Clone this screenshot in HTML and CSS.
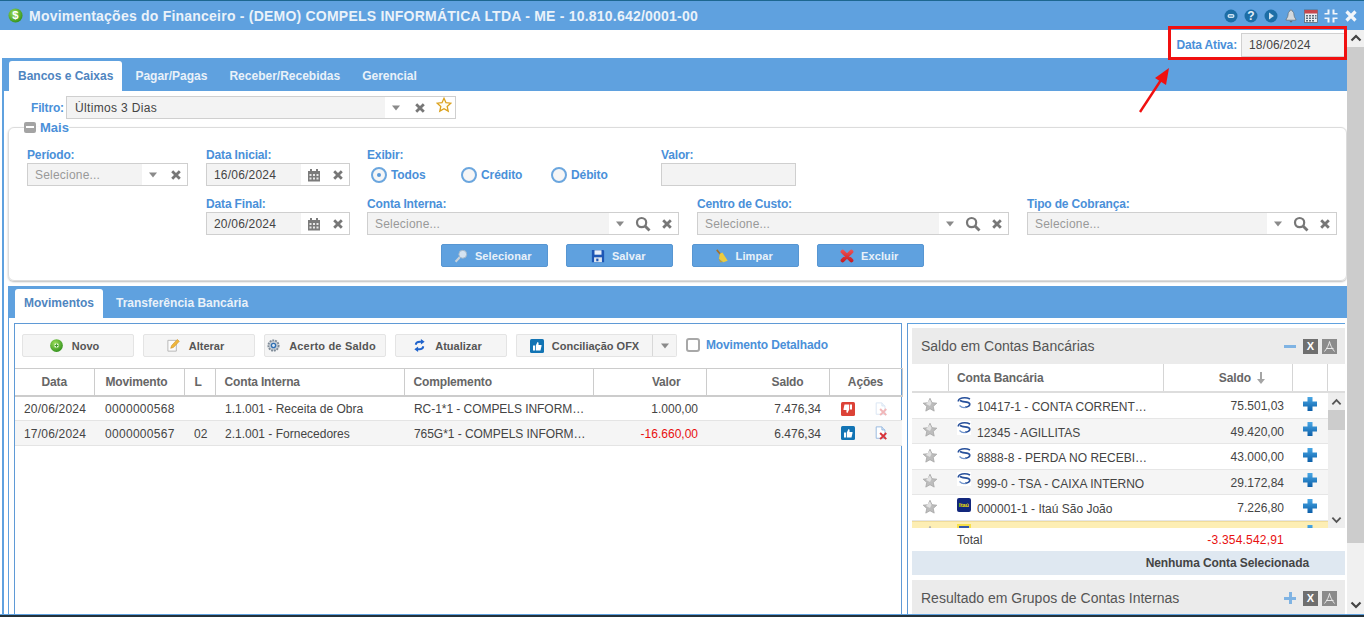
FILE: index.html
```html
<!DOCTYPE html>
<html lang="pt-BR">
<head>
<meta charset="utf-8">
<title>Movimentações do Financeiro</title>
<link rel="stylesheet" href="styles.css">
</head>
<body>
<svg class="defs" width="0" height="0" aria-hidden="true">
  <defs>
    <radialGradient id="g-green" cx=".4" cy=".35" r=".7"><stop offset="0" stop-color="#9ee05a"/><stop offset="1" stop-color="#2f8f1c"/></radialGradient>
    <linearGradient id="g-plus" x1="0" y1="0" x2="0" y2="1"><stop offset="0" stop-color="#49a8e6"/><stop offset="1" stop-color="#0b5ea8"/></linearGradient>
    <linearGradient id="g-red" gradientUnits="userSpaceOnUse" x1="0" y1="0" x2="0" y2="16"><stop offset="0" stop-color="#f0565a"/><stop offset="1" stop-color="#c5161c"/></linearGradient>
    <symbol id="i-caret" viewBox="0 0 10 6"><path d="M1 .5h8L5 5.500z" fill="#8a8a8a"/></symbol>
    <symbol id="i-x" viewBox="0 0 12 12"><path d="M2.200 2.200l7.600 7.600M9.800 2.200l-7.600 7.600" stroke="#777" stroke-width="2.800" fill="none"/></symbol>
    <symbol id="i-search" viewBox="0 0 16 16"><circle cx="6.600" cy="6.600" r="4.600" fill="none" stroke="#777" stroke-width="2.200"/><path d="M10 10l4.500 4.500" stroke="#777" stroke-width="2.800"/></symbol>
    <symbol id="i-cal" viewBox="0 0 14 14"><path d="M1 3h12v10.500H1z" fill="#7b7b7b"/><path d="M3 1h2v3H3zM9 1h2v3H9z" fill="#7b7b7b"/><path d="M2.500 6h2v2h-2zM6 6h2v2H6zM9.500 6h2v2h-2zM2.500 9.500h2v2h-2zM6 9.500h2v2H6zM9.500 9.500h2v2h-2z" fill="#e8e8e8"/></symbol>
    <symbol id="i-star" viewBox="0 0 16 16"><path d="M8 1.300l2 4.400 4.800.5-3.600 3.200 1 4.700L8 11.700l-4.200 2.400 1-4.700L1.200 6.200 6 5.700z" fill="#bdbdbd" stroke="#a5a5a5" stroke-width=".8"/><path d="M8 2.500l1.500 3.400L8 9 4 7z" fill="#e2e2e2"/></symbol>
    <symbol id="i-plus" viewBox="0 0 16 16"><path d="M5.500 1h5v4.500H15v5h-4.500V15h-5v-4.500H1v-5h4.500z" fill="url(#g-plus)"/></symbol>
    <symbol id="i-bank" viewBox="0 0 14 14"><path d="M1.300 5.500C.8 2 8 .3 13 3" fill="none" stroke="#27509b" stroke-width="1.500"/><path d="M3 4.300C5 7 11.500 4.800 12.700 7.800 13 10 10 11 8 11.300" fill="none" stroke="#27509b" stroke-width="1.700"/><path d="M2.500 9.500C4.500 11.500 7 12 9 11.300" fill="none" stroke="#6f93cc" stroke-width="1.200"/></symbol>
    <symbol id="i-thumb" viewBox="0 0 14 14"><path d="M3 6.500h2v5H3zM5.800 6.500L7.500 3c1 0 1.300 1 1 3H11.500v1l-1 4.500H5.800z" fill="#fff"/></symbol>
    <symbol id="i-doc" viewBox="0 0 16 16"><path d="M2.500 1H9l3.500 3.500V14h-10z" fill="#fff" stroke="#8fb4de"/><path d="M9 1v3.500h3.500" fill="#d5e4f5" stroke="#8fb4de"/><path d="M7 8l7 7M14 8l-7 7" stroke="#d8333a" stroke-width="2.200"/></symbol>
  </defs>
</svg>

<div class="window">
  <header class="titlebar">
    <svg class="title-logo" viewBox="0 0 16 16"><circle cx="8" cy="8" r="7.500" fill="url(#g-green)"/><text x="8" y="12" text-anchor="middle" class="dollar">$</text></svg>
    <h1 class="title">Movimentações do Financeiro - (DEMO) COMPELS INFORMÁTICA LTDA - ME - 10.810.642/0001-00</h1>
    <div class="title-tools">
      <svg class="tool" viewBox="0 0 14 14"><circle cx="7" cy="7" r="6.500" fill="#1d6ea6"/><rect x="3.500" y="5" width="7" height="4" rx="2" fill="#cfe2f0"/><rect x="5" y="6.500" width="4" height="1" fill="#1d6ea6"/></svg>
      <svg class="tool" viewBox="0 0 14 14"><circle cx="7" cy="7" r="6.500" fill="#1d6ea6"/><text x="7" y="11" text-anchor="middle" class="qmark">?</text></svg>
      <svg class="tool" viewBox="0 0 14 14"><circle cx="7" cy="7" r="6.500" fill="#1d6ea6"/><path d="M5 3.500l5 3.500-5 3.500z" fill="#cfe2f0"/></svg>
      <svg class="tool" viewBox="0 0 14 14"><path d="M7 .8c.8 0 1 .6 1 1.200 1.500.6 1.800 2 2 4 .2 2 1 3 1.800 4v1.200H2.200V10c.8-1 1.600-2 1.800-4 .2-2 .5-3.400 2-4 0-.6.2-1.200 1-1.200z" fill="#d3d9de" stroke="#5f6b75" stroke-width=".7"/><path d="M5.500 12h3L7 13.800z" fill="#5f6b75"/></svg>
      <svg class="tool" viewBox="0 0 14 14"><rect x=".5" y="1" width="13" height="12.500" fill="#e9eef3" stroke="#4d5d6b" stroke-width=".7"/><rect x=".5" y="1" width="13" height="3.500" fill="#c8464c"/><path d="M2 6h2v1.500H2zM5 6h2v1.500H5zM8 6h2v1.500H8zM11 6h1.500v1.500H11zM2 8.500h2V10H2zM5 8.500h2V10H5zM8 8.500h2V10H8zM11 8.500h1.500V10H11zM2 11h2v1.500H2zM5 11h2v1.500H5zM8 11h2v1.500H8z" fill="#5a6c7c"/></svg>
      <svg class="tool" viewBox="0 0 14 14"><path d="M5.500.5v5h-5V4H3.500L3.500.5zM8.500.5h2V4h3v1.500h-5zM.5 8.500h5v5h-2V10h-3zM8.500 8.500h5V10h-3v3.500h-2z" fill="#f2f6fa"/></svg>
      <svg class="tool" viewBox="0 0 14 14"><path d="M2.500 2.500l9 9M11.500 2.500l-9 9" stroke="#f2f6fa" stroke-width="3.200"/></svg>
    </div>
  </header>

  <div class="workspace">
    <main class="content">
      <div class="date-row">
        <label class="label-inline">Data Ativa:</label>
        <div class="date-input">18/06/2024</div>
      </div>

      <section class="outer-panel">
        <nav class="tabbar">
          <a class="tab tab-active">Bancos e Caixas</a>
          <a class="tab">Pagar/Pagas</a>
          <a class="tab">Receber/Recebidas</a>
          <a class="tab">Gerencial</a>
        </nav>

        <div class="filter-row">
          <label class="label-inline">Filtro:</label>
          <div class="combo combo-filter">
            <span class="combo-text text-dark">Últimos 3 Dias</span>
            <span class="combo-icons">
              <svg class="ic-caret"><use href="#i-caret"/></svg>
              <svg class="ic-x"><use href="#i-x"/></svg>
              <svg class="ic-fav" viewBox="0 0 16 16"><path d="M8 1.300l2 4.400 4.800.5-3.600 3.200 1 4.700L8 11.700l-4.200 2.400 1-4.700L1.200 6.200 6 5.700z" fill="#fffdf2" stroke="#dba11c" stroke-width="1.300"/></svg>
            </span>
          </div>
        </div>

        <fieldset class="more">
          <legend class="more-legend"><span class="collapse-box"></span>Mais</legend>
          <div class="form-row form-row-1">
            <div class="field f-periodo">
              <label class="label">Período:</label>
              <div class="combo"><span class="combo-text">Selecione...</span><span class="combo-icons"><svg class="ic-caret"><use href="#i-caret"/></svg><svg class="ic-x"><use href="#i-x"/></svg></span></div>
            </div>
            <div class="field f-data">
              <label class="label">Data Inicial:</label>
              <div class="combo"><span class="combo-text text-dark">16/06/2024</span><span class="combo-icons"><svg class="ic-cal"><use href="#i-cal"/></svg><svg class="ic-x"><use href="#i-x"/></svg></span></div>
            </div>
            <div class="field f-exibir">
              <label class="label">Exibir:</label>
              <div class="radios">
                <span class="radio radio-on">Todos</span>
                <span class="radio">Crédito</span>
                <span class="radio">Débito</span>
              </div>
            </div>
            <div class="field f-valor">
              <label class="label">Valor:</label>
              <div class="combo"></div>
            </div>
          </div>
          <div class="form-row form-row-2">
            <div class="field f-data">
              <label class="label">Data Final:</label>
              <div class="combo"><span class="combo-text text-dark">20/06/2024</span><span class="combo-icons"><svg class="ic-cal"><use href="#i-cal"/></svg><svg class="ic-x"><use href="#i-x"/></svg></span></div>
            </div>
            <div class="field f-conta">
              <label class="label">Conta Interna:</label>
              <div class="combo"><span class="combo-text">Selecione...</span><span class="combo-icons"><svg class="ic-caret"><use href="#i-caret"/></svg><svg class="ic-search"><use href="#i-search"/></svg><svg class="ic-x"><use href="#i-x"/></svg></span></div>
            </div>
            <div class="field f-conta">
              <label class="label">Centro de Custo:</label>
              <div class="combo"><span class="combo-text">Selecione...</span><span class="combo-icons"><svg class="ic-caret"><use href="#i-caret"/></svg><svg class="ic-search"><use href="#i-search"/></svg><svg class="ic-x"><use href="#i-x"/></svg></span></div>
            </div>
            <div class="field f-tipo">
              <label class="label">Tipo de Cobrança:</label>
              <div class="combo"><span class="combo-text">Selecione...</span><span class="combo-icons"><svg class="ic-caret"><use href="#i-caret"/></svg><svg class="ic-search"><use href="#i-search"/></svg><svg class="ic-x"><use href="#i-x"/></svg></span></div>
            </div>
          </div>
          <div class="actions">
            <button class="btn-blue"><svg class="btn-ic" viewBox="0 0 16 16"><circle cx="10" cy="6" r="4.500" fill="#d4e3f1" stroke="#9fb4c6"/><path d="M6.500 9.500L1.800 14.500" stroke="#c9d3dc" stroke-width="2.400"/></svg>Selecionar</button>
            <button class="btn-blue"><svg class="btn-ic" viewBox="0 0 16 16"><path d="M1 1h13l1 1v13H1z" fill="#1e57b5"/><rect x="4" y="1.500" width="8" height="5" fill="#e9f0fa"/><rect x="3.500" y="9.500" width="9" height="5.500" fill="#dfe6ee"/><rect x="6" y="11" width="2.500" height="3" fill="#1e57b5"/></svg>Salvar</button>
            <button class="btn-blue"><svg class="btn-ic" viewBox="0 0 16 16"><path d="M2 1l5 6" stroke="#a5702a" stroke-width="1.800"/><path d="M5.500 5.500l3-1.500 6 9.500-5 1.500-5-4z" fill="#eccb3e"/><path d="M4 11l5 4-3 0z" fill="#caa225"/></svg>Limpar</button>
            <button class="btn-blue"><svg class="btn-ic" viewBox="0 0 16 16"><path d="M3 3l10 10M13 3L3 13" stroke="url(#g-red)" stroke-width="4.600" stroke-linecap="round"/></svg>Excluir</button>
          </div>
        </fieldset>

        <section class="inner-panel">
          <nav class="tabbar tabbar-inner">
            <a class="tab tab-active tab-mov">Movimentos</a>
            <a class="tab">Transferência Bancária</a>
          </nav>

          <div class="panes">
            <section class="pane-left">
              <div class="toolbar">
                <button class="btn btn-w"><svg class="btn-ic" viewBox="0 0 16 16"><circle cx="8" cy="8" r="6.800" fill="url(#g-green)"/><circle cx="8" cy="8" r="2.500" fill="#e4f6d7"/><path d="M8 6v4M6 8h4" stroke="#3d9a26" stroke-width="1"/></svg>Novo</button>
                <button class="btn btn-w"><svg class="btn-ic" viewBox="0 0 16 16"><path d="M2 2.500h9V14H2z" fill="#fbfbfb" stroke="#b5b5b5"/><path d="M5 11l1-3 6-6.500 2.200 2L8 10z" fill="#f0b73c" stroke="#c98d1f" stroke-width=".6"/></svg>Alterar</button>
                <button class="btn btn-acerto"><svg class="btn-ic" viewBox="0 0 16 16"><circle cx="8" cy="8" r="5.500" fill="#c7ced6" stroke="#7f8b98" stroke-width="2" stroke-dasharray="2 1"/><circle cx="8" cy="8" r="3" fill="#2f6fb3"/><circle cx="8" cy="8" r="1.500" fill="#dfe8f2"/></svg>Acerto de Saldo</button>
                <button class="btn btn-w"><svg class="btn-ic" viewBox="0 0 16 16"><path d="M3 7c0-3 3-4.500 6.500-4V1l4 3-4 3V5C7 4.800 5 5.500 5 7.500z" fill="#1f63cc"/><path d="M13 9c0 3-3 4.500-6.500 4v2l-4-3 4-3v2c2.500.2 4.500-.5 4.500-2.500z" fill="#1f63cc"/></svg>Atualizar</button>
                <div class="split">
                  <button class="btn split-main"><svg class="btn-ic btn-thumb" viewBox="0 0 14 14"><rect width="14" height="14" rx="1.500" fill="#1274b4"/><use href="#i-thumb"/></svg>Conciliação OFX</button>
                  <button class="btn split-arrow"><svg class="ic-caret caret-dark"><use href="#i-caret"/></svg></button>
                </div>
                <span class="check"></span>
                <label class="label-inline check-label">Movimento Detalhado</label>
              </div>

              <table class="grid">
                <colgroup>
                  <col class="c-data"><col class="c-mov"><col class="c-l"><col class="c-conta"><col class="c-comp"><col class="c-valor"><col class="c-saldo"><col class="c-acoes">
                </colgroup>
                <thead>
                  <tr>
                    <th class="center">Data</th><th class="th-mov">Movimento</th><th class="th-l">L</th><th>Conta Interna</th><th>Complemento</th><th class="th-num">Valor</th><th class="th-num">Saldo</th><th class="center">Ações</th>
                  </tr>
                </thead>
                <tbody>
                  <tr>
                    <td class="td-date">20/06/2024</td><td class="td-mov">0000000568</td><td></td><td>1.1.001 - Receita de Obra</td><td class="ell">RC-1*1 - COMPELS INFORM…</td><td class="num">1.000,00</td><td class="num">7.476,34</td>
                    <td class="td-act"><svg class="act" viewBox="0 0 14 14"><rect width="14" height="14" rx="1.500" fill="#dc4237"/><use href="#i-thumb" transform="rotate(180 7 7)"/></svg><svg class="act act-faded"><use href="#i-doc"/></svg></td>
                  </tr>
                  <tr class="alt">
                    <td class="td-date">17/06/2024</td><td class="td-mov">0000000567</td><td>02</td><td>2.1.001 - Fornecedores</td><td class="ell">765G*1 - COMPELS INFORM…</td><td class="num neg">-16.660,00</td><td class="num">6.476,34</td>
                    <td class="td-act"><svg class="act" viewBox="0 0 14 14"><rect width="14" height="14" rx="1.500" fill="#1274b4"/><use href="#i-thumb"/></svg><svg class="act"><use href="#i-doc"/></svg></td>
                  </tr>
                </tbody>
              </table>
            </section>

            <aside class="pane-right">
              <header class="widget-head">
                <h2 class="widget-title">Saldo em Contas Bancárias</h2>
                <span class="w-minus"></span>
                <span class="w-box w-xls">X</span>
                <svg class="w-box w-pdf" viewBox="0 0 15 15"><rect width="15" height="15" fill="#8b8b8b"/><path d="M7.500 2.500c-.5 3-2.500 7-5 10M7.500 2.500c.5 3 2.500 7 5 10M4 9.500h7.500" stroke="#e8e8e8" fill="none"/></svg>
              </header>
              <div class="bank-head">
                <span class="bh bh-star"></span>
                <span class="bh bh-name">Conta Bancária</span>
                <span class="bh bh-saldo">Saldo<svg class="sort" viewBox="0 0 8 12"><path d="M3 0h2v7h3l-4 5-4-5h3z" fill="#a5a5a5"/></svg></span>
                <span class="bh bh-add"></span>
                <span class="bh bh-end"></span>
              </div>
              <div class="bank-scroll">
                <div class="bank-rows">
                  <div class="bank-row"><svg class="b-star"><use href="#i-star"/></svg><svg class="b-logo"><use href="#i-bank"/></svg><span class="b-name">10417-1 - CONTA CORRENT…</span><span class="b-val">75.501,03</span><svg class="b-plus"><use href="#i-plus"/></svg></div>
                  <div class="bank-row alt"><svg class="b-star"><use href="#i-star"/></svg><svg class="b-logo b-logo-w"><use href="#i-bank"/></svg><span class="b-name">12345 - AGILLITAS</span><span class="b-val">49.420,00</span><svg class="b-plus"><use href="#i-plus"/></svg></div>
                  <div class="bank-row"><svg class="b-star"><use href="#i-star"/></svg><svg class="b-logo"><use href="#i-bank"/></svg><span class="b-name">8888-8 - PERDA NO RECEBI…</span><span class="b-val">43.000,00</span><svg class="b-plus"><use href="#i-plus"/></svg></div>
                  <div class="bank-row alt"><svg class="b-star"><use href="#i-star"/></svg><svg class="b-logo b-logo-w"><use href="#i-bank"/></svg><span class="b-name">999-0 - TSA - CAIXA INTERNO</span><span class="b-val">29.172,84</span><svg class="b-plus"><use href="#i-plus"/></svg></div>
                  <div class="bank-row"><svg class="b-star"><use href="#i-star"/></svg><svg class="b-logo" viewBox="0 0 14 14"><rect width="14" height="14" rx="2" fill="#12277c"/><text x="7" y="9" text-anchor="middle" class="itau">Itaú</text></svg><span class="b-name">000001-1 - Itaú São João</span><span class="b-val">7.226,80</span><svg class="b-plus"><use href="#i-plus"/></svg></div>
                  <div class="bank-row row-yellow"><svg class="b-star"><use href="#i-star"/></svg><svg class="b-logo" viewBox="0 0 14 14"><rect width="14" height="14" fill="#f7e04a"/><path d="M2 2h10v4H2z" fill="#3558a8"/></svg><span class="b-name"></span><span class="b-val"></span><svg class="b-plus"><use href="#i-plus"/></svg></div>
                </div>
                <div class="mini-scroll">
                  <svg class="arrow" viewBox="0 0 12 8"><path d="M1.500 6.500L6 2l4.500 4.500" fill="none" stroke="#555" stroke-width="2"/></svg>
                  <span class="mini-thumb"></span>
                  <span class="mini-track"></span>
                  <svg class="arrow" viewBox="0 0 12 8"><path d="M1.500 1.500L6 6l4.500-4.500" fill="none" stroke="#555" stroke-width="2"/></svg>
                </div>
              </div>
              <div class="bank-total"><span class="b-total-label">Total</span><span class="b-total-val">-3.354.542,91</span></div>
              <div class="bank-selected">Nenhuma Conta Selecionada</div>
              <header class="widget-head widget-head-2">
                <h2 class="widget-title">Resultado em Grupos de Contas Internas</h2>
                <span class="w-plus"></span>
                <span class="w-box w-xls">X</span>
                <svg class="w-box w-pdf" viewBox="0 0 15 15"><rect width="15" height="15" fill="#8b8b8b"/><path d="M7.500 2.500c-.5 3-2.500 7-5 10M7.500 2.500c.5 3 2.500 7 5 10M4 9.500h7.500" stroke="#e8e8e8" fill="none"/></svg>
              </header>
            </aside>
          </div>
        </section>
      </section>
    </main>

    <div class="page-scroll">
      <svg class="page-arrow" viewBox="0 0 12 8"><path d="M1.500 6.500L6 2l4.500 4.500" fill="none" stroke="#444" stroke-width="2.200"/></svg>
      <span class="page-thumb"></span>
      <span class="page-track"></span>
      <svg class="page-arrow" viewBox="0 0 12 8"><path d="M1.500 1.500L6 6l4.500-4.500" fill="none" stroke="#444" stroke-width="2.200"/></svg>
    </div>
  </div>

  <div class="annot-box"></div>
  <svg class="annot-arrow" viewBox="0 0 40 50"><path d="M3 47L26 12" stroke="#f01010" stroke-width="2.400"/><path d="M32 3L18 13l11 7z" fill="#f01010"/></svg>
</div>
</body>
</html>
```
FILE: styles.css
```css
* { box-sizing: border-box; }
html, body { margin: 0; padding: 0; height: 100%; overflow: hidden; }
body { font-family: "Liberation Sans", Arial, sans-serif; font-size: 12px; color: #444; background: #fff; }
.defs { position: absolute; }
a { text-decoration: none; }

.window { position: relative; width: 1364px; height: 617px; display: flex; flex-direction: column; border-bottom: 2px solid #24323a; }

/* title bar */
.titlebar { height: 30px; flex: none; display: flex; align-items: center; background: #5fa1df; border-top: 1px solid #1d6790; padding: 0 6px 0 8px; }
.title-logo { width: 15px; height: 15px; flex: none; margin-right: 6px; }
.dollar { font: bold 12px "Liberation Sans", sans-serif; fill: #fff; }
.title { margin: 0; font-size: 14px; font-weight: bold; letter-spacing: .22px; color: #eaf2fa; white-space: nowrap; flex: 1; }
.title-tools { display: flex; align-items: center; gap: 6px; }
.tool { width: 14px; height: 14px; flex: none; }
.qmark { font: bold 12px "Liberation Sans", sans-serif; fill: #e6f0f8; }

/* layout */
.workspace { flex: 1; min-height: 0; display: flex; border-bottom: 1px solid #5fa1df; }
.content { flex: 1; min-width: 0; overflow: hidden; display: flex; flex-direction: column; }

.date-row { height: 28px; flex: none; display: flex; justify-content: flex-end; align-items: center; gap: 4px; padding: 2px 1px 0 0; }
.label-inline { color: #4a90d9; font-weight: bold; font-size: 12px; letter-spacing: -.15px; white-space: nowrap; }
.date-input { width: 105px; height: 24px; line-height: 22px; padding-left: 7px; letter-spacing: .15px; background: #f3f3f3; border: 1px solid #d0d0d0; border-right-color: #fff; color: #444; }

.outer-panel { flex: 1; min-height: 0; margin-left: 2px; border-left: 2px solid #5fa1df; display: flex; flex-direction: column; }

/* tabs */
.tabbar { height: 33px; flex: none; background: #5fa1df; display: flex; align-items: flex-end; padding-left: 5px; margin-left: -2px; }
.tab { height: 30px; line-height: 30px; padding: 0 11px; font-size: 12px; font-weight: bold; color: #e9f1f9; white-space: nowrap; }
.tab-active { background: #fff; color: #4f85bf; border-radius: 3px 3px 0 0; padding: 0 9px; margin-left: 2px; margin-right: 2px; }

/* filter */
.filter-row { height: 23px; margin-top: 5px; flex: none; display: flex; align-items: center; gap: 2px; padding-left: 27px; }
.combo { height: 23px; display: flex; align-items: center; background: #f3f3f3; border: 1px solid #cfcfcf; }
.combo-filter { width: 390px; }
.combo-text { flex: 1; min-width: 0; padding-left: 7px; color: #999; letter-spacing: .2px; white-space: nowrap; overflow: hidden; }
.combo-filter .combo-text { padding-left: 8px; letter-spacing: .35px; }
.more .combo-text { padding-top: 1px; }
.text-dark { color: #444; }
.combo-icons { height: 100%; flex: none; display: flex; align-items: center; gap: 12px; background: #fff; padding: 0 5px 0 6px; }
.combo-filter .combo-icons { padding-right: 3px; }
.ic-caret { width: 10px; height: 6px; }
.caret-dark { display: block; }
.ic-x { width: 12px; height: 12px; }
.ic-search { width: 16px; height: 16px; margin: 0 -2px 0 -2px; }
.ic-cal { width: 14px; height: 14px; margin-right: -1px; }
.ic-fav { width: 16px; height: 16px; margin: -6px 0 0 -2px; }
.combo-filter .ic-x { margin-left: 1px; }

/* fieldset */
.more { flex: none; margin: 1px 0 0 4px; padding: 0 10px 0 18px; height: 161px; border: 1px solid #dcdcdc; border-radius: 6px; box-shadow: 0 1px 2px #bbb; min-width: 0; }
.more-legend { padding: 0; margin-left: -3px; font-size: 13px; font-weight: bold; color: #4a90d9; height: 15px; line-height: 15px; display: flex; align-items: center; gap: 4px; }
.collapse-box { width: 12px; height: 11px; background: #a4a4a4; border-radius: 2px; position: relative; display: inline-block; }
.collapse-box::after { content: ""; position: absolute; left: 2px; right: 2px; top: 4px; height: 2px; background: #fff; }

.form-row { display: flex; }
.form-row-1 { margin-top: 13px; }
.form-row-2 { margin-top: 11px; padding-left: 179px; }
.field { display: flex; flex-direction: column; flex: none; }
.label { color: #4a90d9; font-weight: bold; font-size: 12px; letter-spacing: -.15px; height: 15px; line-height: 14px; white-space: nowrap; }
.f-periodo { width: 161px; margin-right: 18px; }
.f-data { width: 144px; margin-right: 17px; }
.f-exibir { width: 294px; }
.f-valor { width: 135px; }
.f-conta { width: 312px; margin-right: 18px; }
.f-tipo { width: 310px; }

.radios { height: 23px; display: flex; align-items: center; padding: 1px 0 0 4px; }
.radio { width: 90px; color: #4a90d9; font-weight: bold; font-size: 12px; letter-spacing: -.1px; display: flex; align-items: center; }
.radio::before { content: ""; box-sizing: border-box; width: 16px; height: 16px; margin-right: 4px; border: 2px solid #6ba6de; border-radius: 50%; background: #f6f6f6; flex: none; }
.radio-on { position: relative; }
.radio-on::after { content: ""; position: absolute; left: 6px; width: 4px; height: 4px; border-radius: 50%; background: #5b9ada; }

.actions { display: flex; justify-content: center; gap: 18.500px; margin-top: 9px; padding-left: 2px; }
.btn-blue { width: 107px; height: 23px; padding: 0 3px 0 0; display: flex; align-items: center; justify-content: center; gap: 7px; background: #5fa1df; border: 1px solid #5796d2; border-radius: 2px; color: #e9f1f9; font: bold 11px "Liberation Sans", sans-serif; letter-spacing: .1px; }
.btn-ic { width: 15px; height: 15px; flex: none; }
.btn-blue .btn-ic { width: 14px; height: 16px; }

/* lower panel */
.inner-panel { flex: 1; min-height: 0; margin: 5px 0 0 4px; border-left: 1px solid #5fa1df; display: flex; flex-direction: column; }
.tabbar-inner { height: 32px; margin-left: 0; padding-left: 4px; }
.tab-mov { height: 29px; line-height: 29px; margin-left: 2px; }
.tabbar-inner .tab:not(.tab-mov) { height: 29px; line-height: 29px; }

.panes { flex: 1; min-height: 0; display: flex; padding: 5px 2px 0 5px; gap: 5px; }
.pane-left { width: 888px; flex: none; border: 1px solid #5f9ad6; border-bottom: 0; }
.toolbar { height: 44px; display: flex; align-items: flex-start; padding: 10px 0 0 7px; }
.btn { height: 23px; padding: 0; display: flex; align-items: center; justify-content: center; gap: 8px; background: #f5f5f5; border: 1px solid #e4e4e4; border-radius: 2px; color: #555; font: bold 11px "Liberation Sans", sans-serif; flex: none; }
.btn-w { width: 112px; margin-right: 9px; padding-right: 8px; }
.btn-acerto { width: 122px; margin-right: 9px; padding-right: 8px; letter-spacing: .2px; }
.split { display: flex; width: 161px; flex: none; margin-right: 9px; }
.split-main { width: 137px; border-right: 1px solid #d8d8d8; border-radius: 2px 0 0 2px; }
.btn-thumb { width: 14px; height: 14px; }
.split-arrow { width: 24px; border-left: 0; border-radius: 0 2px 2px 0; }
.check { width: 14px; height: 14px; border: 2px solid #a8a8a8; border-radius: 3px; background: #fff; margin: 4px 6px 0 0; flex: none; }
.check-label { line-height: 23px; }

.grid { width: 887px; table-layout: fixed; border-collapse: collapse; }
.c-data { width: 79px; }
.c-mov { width: 90px; }
.c-l { width: 31px; }
.c-conta { width: 189px; }
.c-comp { width: 189px; }
.c-valor { width: 113px; }
.c-saldo { width: 123px; }
.c-acoes { width: 73px; }
.grid th { height: 27px; padding: 0 0 0 9px; text-align: left; font-weight: bold; font-size: 12px; letter-spacing: -.15px; color: #666; border-top: 1px solid #ccc; border-right: 1px solid #ccc; border-bottom: 2px solid #ccc; }
.grid th.center { text-align: center; padding: 0; }
.grid th.th-mov { padding-left: 11px; }
.grid th.th-l { padding-left: 10px; }
.grid th.th-num { text-align: right; padding: 0 25px 0 0; }
.grid td { height: 25px; padding: 1px 0 0 10px; font-size: 12px; color: #444; border-bottom: 1px solid #e4e4e4; white-space: nowrap; overflow: hidden; }
.grid .td-date { padding-left: 9px; letter-spacing: .2px; }
.grid .td-mov { padding-left: 11px; letter-spacing: .3px; }
.grid .ell { text-overflow: ellipsis; letter-spacing: -.05px; }
.grid .num { text-align: right; padding: 1px 8px 0 0; }
.grid .neg { color: #e81010; }
.grid .alt td { background: #f5f5f5; }
.grid .td-act { padding: 0 0 0 12px; }
.act { width: 14px; height: 14px; margin-right: 19px; vertical-align: middle; }
.act-faded { opacity: .35; }

/* right pane */
.pane-right { flex: 1; min-width: 0; border-left: 1px solid #5f9ad6; border-top: 1px solid #5fa1df; padding: 4px 0 0 4px; overflow: hidden; display: flex; flex-direction: column; }
.widget-head { height: 36px; flex: none; display: flex; align-items: center; background: #ebebeb; padding: 0 8px 0 9px; }
.widget-title { flex: 1; margin: 0; font-size: 14px; font-weight: normal; color: #555; white-space: nowrap; }
.w-minus { width: 12px; height: 3px; background: #7fb3e3; margin-right: 7px; }
.w-plus { width: 12px; height: 12px; margin-right: 7px; background: linear-gradient(#7fb3e3, #7fb3e3) center / 12px 3px no-repeat, linear-gradient(#7fb3e3, #7fb3e3) center / 3px 12px no-repeat; }
.w-box { width: 15px; height: 15px; flex: none; }
.w-xls { background: #6f6f6f; color: #fff; font-size: 11px; font-weight: bold; line-height: 15px; text-align: center; margin-right: 4px; }
.bank-head { height: 29px; flex: none; display: flex; border-bottom: 2px solid #ddd; }
.bh { border-right: 1px solid #d5d5d5; font-weight: bold; font-size: 12px; letter-spacing: -.1px; color: #666; line-height: 28px; flex: none; }
.bh-star { width: 37px; }
.bh-name { width: 215px; padding-left: 8px; }
.bh-saldo { width: 129px; text-align: right; padding-right: 27px; position: relative; }
.sort { width: 8px; height: 12px; margin-left: 6px; vertical-align: -2px; }
.bh-add { width: 35px; }
.bh-end { flex: 1; border-right: 0; }
.bank-scroll { height: 135px; flex: none; display: flex; overflow: hidden; }
.bank-rows { width: 416px; flex: none; }
.bank-row { height: 25.500px; display: flex; align-items: center; border-bottom: 1px solid #e6e6e6; position: relative; }
.bank-row.alt { background: #f5f5f5; }
.row-yellow { background: #fdeeb4; border-top: 1px solid #f0dc9a; }
.b-star { width: 16px; height: 16px; margin: -1px 19px 0 10px; flex: none; }
.b-logo { width: 14px; height: 14px; margin: -5px 6px 0 0; flex: none; }
.b-logo-w { background: #fff; }
.itau { font: bold 5.500px "Liberation Sans", sans-serif; fill: #f4e000; }
.b-name { width: 171px; margin-top: 4px; white-space: nowrap; color: #444; overflow: hidden; flex: none; }
.b-val { width: 136px; text-align: right; color: #444; margin-top: 2px; flex: none; }
.b-plus { width: 16px; height: 16px; margin: -3px 0 0 18px; flex: none; }
.mini-scroll { flex: 1; background: #eee; display: flex; flex-direction: column; align-items: center; }
.mini-scroll .arrow { width: 11px; height: 8px; flex: none; margin: 5px 0 4px; }
.mini-thumb { align-self: stretch; height: 20px; background: #ccc; flex: none; }
.mini-track { flex: 1; }
.bank-total { height: 23px; flex: none; display: flex; align-items: center; justify-content: space-between; padding: 0 61px 0 45px; }
.b-total-label { color: #444; }
.b-total-val { white-space: nowrap; letter-spacing: .2px; color: #e81010; }
.bank-selected { height: 24px; flex: none; padding-right: 36px; background: #dfe8f1; font-weight: bold; font-size: 12px; letter-spacing: -.08px; color: #444; line-height: 24px; text-align: right; }
.widget-head-2 { margin-top: 5px; }

/* page scrollbar */
.page-scroll { width: 17px; flex: none; background: #f0f0f0; display: flex; flex-direction: column; align-items: center; }
.page-arrow { width: 12px; height: 8px; flex: none; margin: 4px 0 5px; }
.page-thumb { align-self: stretch; height: 496px; background: #ccc; flex: none; }
.page-track { flex: 1; }

/* annotations */
.annot-box { position: absolute; left: 1168px; top: 26px; width: 179px; height: 34px; border: 3px solid #f01010; }
.annot-arrow { position: absolute; left: 1137px; top: 65px; width: 40px; height: 50px; }
```
